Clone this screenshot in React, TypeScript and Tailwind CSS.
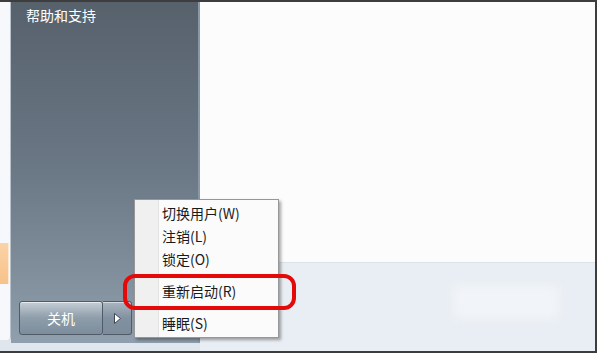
import React from 'react';

const font = { fontFamily: '"Noto Sans CJK SC", "Microsoft YaHei", sans-serif' };

const MenuItem = ({ label }: { label: string }) => (
  <div className="h-[23px] flex items-center pl-[3px] text-[14px] text-[#1a1a1a] leading-none">{label}</div>
);

const Separator = () => <div className="h-[9px]" />;

const App = () => {
  return (
    <div className="w-[597px] h-[353px] bg-[#3d3d3d] pt-[2px] pb-[2px] pr-[2px] overflow-hidden" style={font}>
      <div className="relative w-full h-full flex bg-[#dfe6ee]">
        {/* left white strip */}
        <div className="w-[11px] h-[338px] flex flex-col bg-[#f6f8fb] border-r border-[#b9c2cb] rounded-br-[3px]">
          <div className="h-[241px]" />
          <div className="h-[41px] w-[9px] bg-gradient-to-b from-[#fbd3a6] to-[#f7c28a] border-r border-[#fce9d4]" />
        </div>

        {/* gray panel */}
        <div className="w-[189px] h-[341px] flex flex-col bg-gradient-to-b from-[#56616c] via-[#6b7885] to-[#909fad] border-r-2 border-[#8898a7]">
          <div className="pl-[15px] pt-[3px] text-[14px] text-white leading-[20px]">帮助和支持</div>
          <div className="flex-1" />
          <div className="flex pl-[8px] pb-[8px]">
            <div className="w-[84px] h-[34px] rounded-[3px] border border-[#4f5b66] flex items-center justify-center text-white text-[14px] bg-gradient-to-b from-[#c5ced6] via-[#8e9daa] to-[#7d8d9c] shadow-[inset_0_1px_0_rgba(255,255,255,0.6)]">
              关机
            </div>
            <div className="w-[29px] h-[34px] rounded-r-[3px] border border-l-0 border-[#4f5b66] flex items-center justify-center bg-gradient-to-b from-[#aab6c1] via-[#8291a0] to-[#7c8c9b] shadow-[inset_0_1px_0_rgba(255,255,255,0.5)]">
              <svg width="9" height="13" viewBox="0 0 9 13">
                <path d="M1.5 1.5 L7.5 6.5 L1.5 11.5 Z" fill="#ffffff" stroke="#3d4853" strokeWidth="1" strokeLinejoin="round" />
              </svg>
            </div>
          </div>
        </div>

        {/* right area */}
        <div className="flex-1 flex flex-col">
          <div className="h-[261px] bg-[#fcfcfc] border-b border-[#dbe2ea]" />
          <div className="flex-1 bg-[#e9eef4] flex items-start pl-[253px] pt-[22px]">
            <div className="w-[106px] h-[34px] bg-[#f1f4f8] blur-[5px]" />
          </div>
        </div>

        {/* power submenu */}
        <div className="absolute left-[134px] top-[197px] w-[145px] h-[139px] bg-[#f0f0f0] border border-[#979797] shadow-[2px_2px_3px_rgba(0,0,0,0.35)] flex">
          <div className="w-[24px] bg-[#f0f0f0] border-r border-[#e2e3e3]" />
          <div className="flex-1 bg-[#fbfbfb] flex flex-col pt-[1px]">
            <MenuItem label="切换用户(W)" />
            <MenuItem label="注销(L)" />
            <MenuItem label="锁定(O)" />
            <Separator />
            <MenuItem label="重新启动(R)" />
            <Separator />
            <MenuItem label="睡眠(S)" />
          </div>
        </div>

        {/* red highlight */}
        <div className="absolute left-[123px] top-[272px] w-[173px] h-[36px] rounded-[12px] border-[4px] border-[#e40a0a]" />
      </div>
    </div>
  );
};

export default App;
